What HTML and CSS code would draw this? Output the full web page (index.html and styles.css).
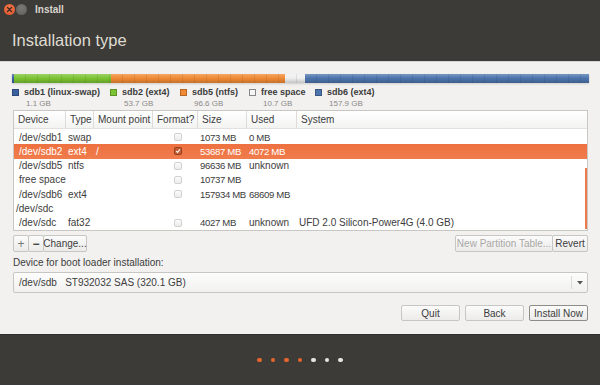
FILE: index.html
```html
<!DOCTYPE html>
<html>
<head>
<meta charset="utf-8">
<link rel="stylesheet" href="styles.css">
</head>
<body>
<div class="window">
  <div class="top">
    <div class="titlebar">
      <span class="wbtn close"><svg width="7" height="7" viewBox="0 0 7 7"><path d="M1.5 1.5 L5.5 5.5 M5.5 1.5 L1.5 5.5" stroke="#3c2a22" stroke-width="1.3" stroke-linecap="round"/></svg></span>
      <span class="wbtn min"></span>
      <span class="wtitle">Install</span>
    </div>
    <h1 class="heading">Installation type</h1>
  </div>
  <div class="content">
    <div class="pbar">
      <div class="seg swap" style="width:1.5px"></div>
      <div class="seg ext4g" style="width:97px"></div>
      <div class="seg ntfs" style="width:174px"></div>
      <div class="seg free" style="width:20px"></div>
      <div class="seg ext4b" style="flex:1"></div>
    </div>
    <div class="legend">
      <div class="litem w98"><span class="sq c-swap"></span><div><div class="lname">sdb1 (linux-swap)</div><div class="lsize">1.1 GB</div></div></div>
      <div class="litem w70"><span class="sq c-green"></span><div><div class="lname">sdb2 (ext4)</div><div class="lsize">53.7 GB</div></div></div>
      <div class="litem w69"><span class="sq c-orange"></span><div><div class="lname">sdb5 (ntfs)</div><div class="lsize">96.6 GB</div></div></div>
      <div class="litem w67"><span class="sq c-free"></span><div><div class="lname">free space</div><div class="lsize">10.7 GB</div></div></div>
      <div class="litem"><span class="sq c-blue"></span><div><div class="lname">sdb6 (ext4)</div><div class="lsize">157.9 GB</div></div></div>
    </div>
    <div class="table">
      <div class="thead">
        <div>Device</div><div>Type</div><div>Mount point</div><div>Format?</div><div>Size</div><div>Used</div><div>System</div>
      </div>
      <div class="tbody">
        <div class="row"><div class="ind">/dev/sdb1</div><div>swap</div><div></div><div class="cb"><span class="box"></span></div><div class="num">1073 MB</div><div class="num">0 MB</div><div></div></div>
        <div class="row sel"><div class="ind">/dev/sdb2</div><div>ext4</div><div>/</div><div class="cb"><span class="box on"><svg width="8" height="8" viewBox="0 0 8 8"><path d="M1.5 4 L3.3 5.8 L6.6 1.8" fill="none" stroke="#fff" stroke-width="1.4"/></svg></span></div><div class="num">53687 MB</div><div class="num">4072 MB</div><div></div></div>
        <div class="row"><div class="ind">/dev/sdb5</div><div>ntfs</div><div></div><div class="cb"><span class="box"></span></div><div class="num">96636 MB</div><div>unknown</div><div></div></div>
        <div class="row"><div class="ind">free space</div><div></div><div></div><div class="cb"><span class="box"></span></div><div class="num">10737 MB</div><div></div><div></div></div>
        <div class="row"><div class="ind">/dev/sdb6</div><div>ext4</div><div></div><div class="cb"><span class="box"></span></div><div class="num">157934 MB</div><div class="num">68609 MB</div><div></div></div>
        <div class="row"><div class="disk">/dev/sdc</div><div></div><div></div><div></div><div></div><div></div><div></div></div>
        <div class="row"><div class="ind">/dev/sdc</div><div>fat32</div><div></div><div class="cb"><span class="box"></span></div><div class="num">4027 MB</div><div>unknown</div><div>UFD 2.0 Silicon-Power4G (4.0 GB)</div></div>
        <span class="scroll"></span>
      </div>
    </div>
    <div class="tools">
      <div class="group">
        <button class="btn sq-btn">+</button><button class="btn sq-btn minus">−</button><button class="btn change">Change...</button>
      </div>
      <div class="group">
        <button class="btn disabled">New Partition Table...</button><button class="btn revert">Revert</button>
      </div>
    </div>
    <div class="label">Device for boot loader installation:</div>
    <div class="combo">
      <span class="ctext">/dev/sdb&nbsp;&nbsp;&nbsp;ST932032 SAS (320.1 GB)</span>
      <span class="carrow"><svg width="6" height="4" viewBox="0 0 6 4"><path d="M0 0 L6 0 L3 3.5 Z" fill="#555"/></svg></span>
    </div>
    <div class="actions">
      <button class="btn act">Quit</button>
      <button class="btn act">Back</button>
      <button class="btn act default">Install Now</button>
    </div>
  </div>
  <div class="footer">
    <span class="dot on"></span><span class="dot on"></span><span class="dot on"></span><span class="dot on"></span><span class="dot"></span><span class="dot"></span><span class="dot"></span>
  </div>
</div>
</body>
</html>
```
FILE: styles.css
```css
* { box-sizing: border-box; }
html, body { margin: 0; padding: 0; }
body {
  width: 600px; height: 385px; overflow: hidden;
  font-family: "Liberation Sans", Arial, sans-serif;
  font-size: 10px; color: #3c3c3c;
  background: #3c3b37;
}
.window { display: flex; flex-direction: column; height: 385px; }
.top { background: #3c3b37; height: 61px; display: flex; flex-direction: column; }
.titlebar { display: flex; align-items: center; height: 18px; padding-left: 4px; }
.wbtn { width: 11px; height: 11px; border-radius: 50%; display: inline-flex; align-items: center; justify-content: center; margin-right: 1px; }
.close { background: radial-gradient(circle at 50% 35%, #f27a4c, #e0512a); }
.min { background: radial-gradient(circle at 50% 35%, #7a7974, #5d5c58); }
.wtitle { color: #d8d4cc; font-weight: 700; font-size: 10px; margin-left: 7px; }
.heading { margin: 12px 0 0 12px; font-weight: 400; font-size: 16.5px; line-height: 20px; color: #dfdbd2; }

.content { flex: 1; background: #f2f1f0; padding: 12px 12px 0 13px; display: flex; flex-direction: column; border-top: 1px solid #d6d4d0; }
.pbar { display: flex; height: 9px; margin-left: -1px; margin-right: -1px; box-shadow: 0 1px 2px rgba(0,0,0,0.15); }
.seg { height: 100%;
  background-image: repeating-linear-gradient(90deg, transparent 0 11px, rgba(0,0,0,0.08) 11px 12px),
                    linear-gradient(180deg, rgba(255,255,255,0.25), rgba(255,255,255,0) 45%, rgba(0,0,0,0.18));
}
.swap { background-color: #3b62a0; }
.ext4g { background-color: #7cc434; }
.ntfs { background-color: #f18a34; }
.free { background-color: #efefef; }
.ext4b { background-color: #4d75ad; }
.legend { display: flex; margin-top: 4px; height: 22px; margin-left: -1px; }
.litem { display: flex; align-items: flex-start; }
.w98 { width: 98px; } .w70 { width: 70px; } .w69 { width: 69px; } .w67 { width: 66px; }
.sq { width: 7px; height: 7px; margin: 2px 5px 0 0; flex: none; border: 1px solid rgba(0,0,0,0.25); }
.c-swap { background: #3b62a0; } .c-green { background: #7cc434; } .c-orange { background: #f18a34; } .c-free { background: #f6f6f6; border-color: #888; } .c-blue { background: #4d75ad; }
.lname { font-weight: 700; font-size: 9px; line-height: 11px; color: #3c3c3c; white-space: nowrap; }
.lsize { font-size: 8px; line-height: 11px; color: #8a8986; margin-left: 2px; }

.table { margin-top: 1px; border: 1px solid #c9c7c3; background: #fff; height: 121px; display: flex; flex-direction: column; }
.thead, .row { display: grid; grid-template-columns: 52px 28px 59px 45px 49px 50px 1fr; }
.thead { height: 18px; background: linear-gradient(#ffffff, #f3f3f2); border-bottom: 1px solid #e2e1df; }
.thead > div { padding-left: 4px; border-right: 1px solid #dddcda; display: flex; align-items: center; white-space: nowrap; overflow: hidden; }
.thead > div:last-child { border-right: none; }
.tbody { position: relative; padding-top: 1px; flex: 1; }
.row { height: 14.3px; align-items: center; }
.row > div { padding-left: 2px; white-space: nowrap; }
.row > .ind { padding-left: 5px; }
.row > .disk { padding-left: 2px; }
.row > .num { font-size: 9.6px; letter-spacing: -0.35px; }
.row.sel { background: linear-gradient(#ee7040, #f07c4c); color: #fff; }
.cb { display: flex; justify-content: center; padding-left: 0 !important; }
.box { width: 8px; height: 8px; border: 1px solid #d2d1cf; border-radius: 2px; background: linear-gradient(#fbfbfb, #ececec); display: inline-flex; align-items: center; justify-content: center; margin-left: 4px; }
.box.on { background: rgba(120,50,20,0.35); border-color: rgba(110,40,10,0.55); }
.box svg { display: block; }
.scroll { position: absolute; right: 0; top: 39px; width: 2px; height: 61px; background: #ee7a4a; }

.tools { display: flex; justify-content: space-between; margin-top: 4px; }
.group { display: flex; }
.btn { font-family: inherit; font-size: 10px; color: #3c3c3c; height: 17px; padding: 0 3px; border: 1px solid #c8c6c2; border-radius: 2px; background: linear-gradient(#fbfbfb, #ecebea); display: inline-flex; align-items: center; justify-content: center; margin: 0; white-space: nowrap; }
.group .btn + .btn { margin-left: -1px; }
.sq-btn { width: 16px; font-size: 12px; color: #777; padding: 0; }
.minus { color: #444; font-weight: 700; }
.change { width: 44px; }
.disabled { color: #a9a8a5; width: 98px; }
.revert { width: 36px; }
.label { margin-top: 5px; line-height: 12px; }
.combo { margin-top: 3px; height: 21px; border: 1px solid #c8c6c2; border-radius: 2px; background: linear-gradient(#fdfdfd, #f1f0ef); display: flex; align-items: center; justify-content: space-between; }
.ctext { padding-left: 5px; }
.carrow { width: 16px; height: 13px; border-left: 1px solid #dcdbd9; display: flex; align-items: center; justify-content: center; }
.actions { display: flex; justify-content: flex-end; gap: 5px; margin-top: 12px; }
.btn.act { width: 59px; height: 16px; }
.btn.act.default { border-color: #8e8c88; }

.footer { height: 51px; background: #3c3b37; display: flex; justify-content: center; align-items: center; gap: 9px; border-top: 1px solid #2f2e2b; }
.dot { width: 4.5px; height: 4.5px; border-radius: 50%; background: #e8e6e2; }
.dot.on { background: #e8652e; }
```
